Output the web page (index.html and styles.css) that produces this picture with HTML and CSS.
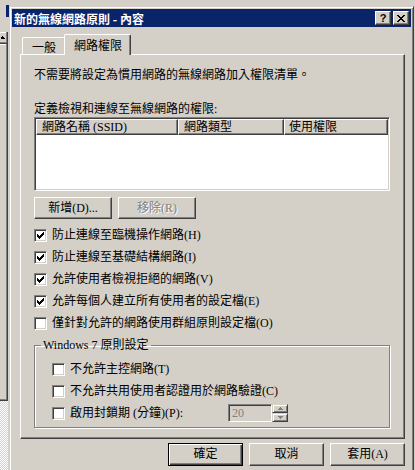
FILE: index.html
```html
<!DOCTYPE html>
<html lang="zh-Hant">
<head>
<meta charset="utf-8">
<title>新的無線網路原則 - 內容</title>
<link rel="stylesheet" href="styles.css">
</head>
<body>
<div class="screen">
  <div class="behind">
    <div class="behind-title"></div>
    <div class="scrollbar">
      <div class="sb-btn"><svg class="sb-arrow" width="4" height="3" viewBox="0 0 4 3"><path d="M1 0h1v1h-1z M0 1h3v1h-3z M0 2h4v1h-4z" fill="#000"/></svg></div>
      <div class="sb-thumb"></div>
      <div class="sb-track"></div>
    </div>
  </div>

  <div class="dialog">
    <div class="titlebar">
      <span class="title">新的無線網路原則 - 內容</span>
      <span class="cap-btn help">?</span>
      <span class="cap-btn close"><svg width="8" height="7" viewBox="0 0 8 7" shape-rendering="crispEdges"><path d="M0 0h2v1h-2z M6 0h2v1h-2z M1 1h2v1h-2z M5 1h2v1h-2z M2 2h4v1h-4z M3 3h2v1h-2z M2 4h4v1h-4z M1 5h2v1h-2z M5 5h2v1h-2z M0 6h2v1h-2z M6 6h2v1h-2z" fill="#000"/></svg></span>
    </div>

    <div class="dlg-body">
      <div class="tabs">
        <div class="tab">一般</div>
        <div class="tab active">網路權限</div>
      </div>

      <div class="panel">
        <div class="intro">不需要將設定為慣用網路的無線網路加入權限清單。</div>
        <div class="label">定義檢視和連線至無線網路的權限:</div>
        <div class="list">
          <div class="list-head">
            <div class="col c1">網路名稱 (SSID)</div>
            <div class="col c2">網路類型</div>
            <div class="col c3">使用權限</div>
          </div>
        </div>
        <div class="btn-row">
          <div class="btn small">新增(D)...</div>
          <div class="btn small disabled">移除(R)</div>
        </div>

        <div class="checks">
          <div class="check"><span class="box"><svg class="tick" width="7" height="7" viewBox="0 0 7 7" shape-rendering="crispEdges"><path d="M6 0h1v1h-1z M5 1h2v1h-2z M0 2h1v1h-1z M4 2h3v1h-3z M0 3h2v1h-2z M3 3h3v1h-3z M0 4h5v1h-5z M1 5h3v1h-3z M2 6h1v1h-1z" fill="#000"/></svg></span><span class="ctext">防止連線至臨機操作網路(H)</span></div>
          <div class="check"><span class="box"><svg class="tick" width="7" height="7" viewBox="0 0 7 7" shape-rendering="crispEdges"><path d="M6 0h1v1h-1z M5 1h2v1h-2z M0 2h1v1h-1z M4 2h3v1h-3z M0 3h2v1h-2z M3 3h3v1h-3z M0 4h5v1h-5z M1 5h3v1h-3z M2 6h1v1h-1z" fill="#000"/></svg></span><span class="ctext">防止連線至基礎結構網路(I)</span></div>
          <div class="check"><span class="box"><svg class="tick" width="7" height="7" viewBox="0 0 7 7" shape-rendering="crispEdges"><path d="M6 0h1v1h-1z M5 1h2v1h-2z M0 2h1v1h-1z M4 2h3v1h-3z M0 3h2v1h-2z M3 3h3v1h-3z M0 4h5v1h-5z M1 5h3v1h-3z M2 6h1v1h-1z" fill="#000"/></svg></span><span class="ctext">允許使用者檢視拒絕的網路(V)</span></div>
          <div class="check"><span class="box"><svg class="tick" width="7" height="7" viewBox="0 0 7 7" shape-rendering="crispEdges"><path d="M6 0h1v1h-1z M5 1h2v1h-2z M0 2h1v1h-1z M4 2h3v1h-3z M0 3h2v1h-2z M3 3h3v1h-3z M0 4h5v1h-5z M1 5h3v1h-3z M2 6h1v1h-1z" fill="#000"/></svg></span><span class="ctext">允許每個人建立所有使用者的設定檔(E)</span></div>
          <div class="check"><span class="box"></span><span class="ctext">僅針對允許的網路使用群組原則設定檔(O)</span></div>
        </div>

        <fieldset class="group">
          <legend>Windows 7 原則設定</legend>
          <div class="group-body">
            <div class="check"><span class="box"></span><span class="ctext">不允許主控網路(T)</span></div>
            <div class="check"><span class="box"></span><span class="ctext">不允許共用使用者認證用於網路驗證(C)</span></div>
            <div class="check"><span class="box"></span><span class="ctext spin-label">啟用封鎖期 (分鐘)(P):</span>
              <div class="spin">
                <div class="spin-edit">20</div>
                <div class="spin-btns">
                  <div class="spin-btn"><svg width="5" height="3" viewBox="0 0 5 3" shape-rendering="crispEdges"><path d="M2 0h1v1h-1z M1 1h3v1h-3z M0 2h5v1h-5z" fill="#808080"/></svg></div>
                  <div class="spin-btn"><svg width="5" height="3" viewBox="0 0 5 3" shape-rendering="crispEdges"><path d="M0 0h5v1h-5z M1 1h3v1h-3z M2 2h1v1h-1z" fill="#808080"/></svg></div>
                </div>
              </div>
            </div>
          </div>
        </fieldset>
      </div>

      <div class="actions">
        <div class="btn default">確定</div>
        <div class="btn">取消</div>
        <div class="btn">套用(A)</div>
      </div>
    </div>
  </div>
</div>
</body>
</html>
```

FILE: styles.css
```css
* { box-sizing: border-box; }
html, body { margin: 0; padding: 0; }
body {
  background: #d4d0c8;
  font-family: "Liberation Serif", "Noto Sans CJK TC", serif;
  font-size: 12px;
  line-height: 13px;
  color: #000;
}
.screen {
  display: flex;
  width: 415px;
  height: 470px;
  overflow: hidden;
}

/* window behind the dialog */
.behind {
  flex: none;
  width: 9px;
  display: flex;
  flex-direction: column;
}
.behind-title {
  height: 12px;
  margin: 5px 0 0 6px;
  background: #0a246a;
}
.scrollbar {
  margin-top: 15px;
  width: 8px;
  flex: 1;
  display: flex;
  flex-direction: column;
}
.sb-btn {
  height: 12px;
  border-right: 1px solid #404040;
  border-bottom: 1px solid #404040;
  box-shadow: inset -1px -1px #808080, inset 0 1px #fff;
  display: flex;
  align-items: center;
  padding-left: 1px;
}
.sb-thumb {
  height: 357px;
  border-right: 1px solid #404040;
  border-bottom: 1px solid #404040;
  box-shadow: inset -1px -1px #808080, inset 0 1px #fff;
}
.sb-track {
  flex: 1;
  background: repeating-conic-gradient(#fff 0 25%, #d4d0c8 0 50%) 0 0 / 2px 2px;
}

/* dialog frame */
.dialog {
  flex: none;
  width: 405px;
  height: 480px;
  margin-top: 6px;
  background: #d4d0c8;
  border: 1px solid;
  border-color: #d4d0c8 #404040 #404040 #d4d0c8;
  box-shadow: inset 1px 1px #fff, inset -1px -1px #808080;
  padding: 2px;
}
.titlebar {
  height: 18px;
  background: #0a246a;
  display: flex;
  align-items: center;
  padding: 0 2px;
}
.title {
  flex: 1;
  color: #fff;
  font-weight: bold;
  font-family: "Noto Sans CJK TC", sans-serif;
  font-size: 12px;
  white-space: nowrap;
}
.cap-btn {
  flex: none;
  width: 16px;
  height: 14px;
  background: #d4d0c8;
  border: 1px solid;
  border-color: #fff #404040 #404040 #fff;
  box-shadow: inset -1px -1px #808080;
  display: flex;
  align-items: center;
  justify-content: center;
}
.help {
  margin-right: 2px;
  font-family: "Liberation Sans", sans-serif;
  font-weight: bold;
  font-size: 11px;
  line-height: 11px;
}

.dlg-body {
  padding: 7px 6px 0 8px;
}

/* tabs */
.tabs {
  display: flex;
  align-items: flex-end;
  height: 21px;
  padding-left: 2px;
  margin-bottom: -1px;
}
.tab {
  height: 17px;
  margin-bottom: 1px;
  padding: 2px 9px 0 9px;
  border-top: 1px solid #fff;
  border-left: 1px solid #fff;
  border-right: 1px solid #404040;
  box-shadow: inset -1px 0 #808080;
  border-radius: 2px 2px 0 0;
  font-family: "Noto Sans CJK TC", sans-serif;
  background: #d4d0c8;
}
.tab.active {
  position: relative;
  z-index: 1;
  height: 21px;
  margin-bottom: 0;
  margin-left: -2px;
  padding: 3px 8px 0 9px;
}

/* panel */
.panel {
  height: 385px;
  border: 1px solid;
  border-color: #fff #404040 #404040 #fff;
  box-shadow: inset -1px -1px #808080;
  padding: 0 14px 0 13px;
  display: flex;
  flex-direction: column;
}
.intro { margin-top: 14px; white-space: nowrap; }
.label { margin-top: 21px; white-space: nowrap; }

.list {
  flex: none;
  height: 74px;
  margin-top: 1px;
  background: #fff;
  border: 1px solid;
  border-color: #808080 #fff #fff #808080;
  box-shadow: inset 1px 1px #404040, inset -1px -1px #d4d0c8;
  padding: 1px;
}
.list-head {
  display: flex;
  height: 16px;
}
.col {
  height: 16px;
  background: #d4d0c8;
  border: 1px solid;
  border-color: #fff #404040 #404040 #fff;
  box-shadow: inset -1px -1px #808080;
  padding: 1px 0 0 5px;
  white-space: nowrap;
}
.c1 { width: 142px; }
.c2 { width: 106px; }
.c3 { width: 104px; padding-left: 4px; }

/* buttons */
.btn-row {
  display: flex;
  gap: 6px;
  margin-top: 6px;
}
.btn {
  flex: none;
  width: 75px;
  height: 23px;
  display: flex;
  align-items: center;
  justify-content: center;
  background: #d4d0c8;
  border: 1px solid;
  border-color: #fff #404040 #404040 #fff;
  box-shadow: inset -1px -1px #808080;
  white-space: nowrap;
}
.btn.small {
  width: 78px;
  height: 22px;
}
.btn.disabled {
  color: #808080;
  text-shadow: 1px 1px 0 #fff;
}
.btn.default {
  border-color: #000;
  box-shadow: inset 1px 1px #fff, inset -1px -1px #404040, inset -2px -2px #808080;
}

/* checkboxes */
.checks {
  margin-top: 6px;
  display: flex;
  flex-direction: column;
}
.check {
  height: 22px;
  display: flex;
  align-items: flex-start;
}
.box {
  flex: none;
  width: 13px;
  height: 13px;
  margin-top: 4px;
  background: #fff;
  border: 1px solid;
  border-color: #808080 #fff #fff #808080;
  box-shadow: inset 1px 1px #404040, inset -1px -1px #d4d0c8;
  display: flex;
  align-items: flex-start;
  justify-content: flex-start;
  padding: 2px 0 0 2px;
}
.tick { display: block; }
.ctext {
  margin: 4px 0 0 5px;
  white-space: nowrap;
}

/* group box */
.group {
  margin: 4px 0 0 0;
  padding: 0;
  width: 356px;
  min-width: 0;
  border: 1px solid #808080;
  box-shadow: 1px 1px 0 #fff, inset 1px 1px 0 #fff;
}
.group legend {
  margin-left: 6px;
  padding: 0 2px;
  line-height: 13px;
}
.group-body {
  padding: 7px 0 2px 17px;
}
.spin-label {
  width: 158px;
}
.spin {
  display: flex;
  height: 18px;
  margin-top: 1px;
}
.spin-edit {
  width: 44px;
  height: 18px;
  border: 1px solid;
  border-color: #808080 #fff #fff #808080;
  box-shadow: inset 1px 1px #404040, inset -1px -1px #d4d0c8;
  color: #808080;
  padding: 2px 0 0 3px;
  line-height: 13px;
}
.spin-btns {
  width: 16px;
  display: flex;
  flex-direction: column;
}
.spin-btn {
  height: 9px;
  border: 1px solid;
  border-color: #d4d0c8 #404040 #404040 #d4d0c8;
  box-shadow: inset 1px 1px #fff, inset -1px -1px #808080;
  display: flex;
  align-items: center;
  justify-content: center;
}

/* bottom buttons */
.actions {
  display: flex;
  justify-content: flex-end;
  gap: 6px;
  margin-top: 4px;
}
```
